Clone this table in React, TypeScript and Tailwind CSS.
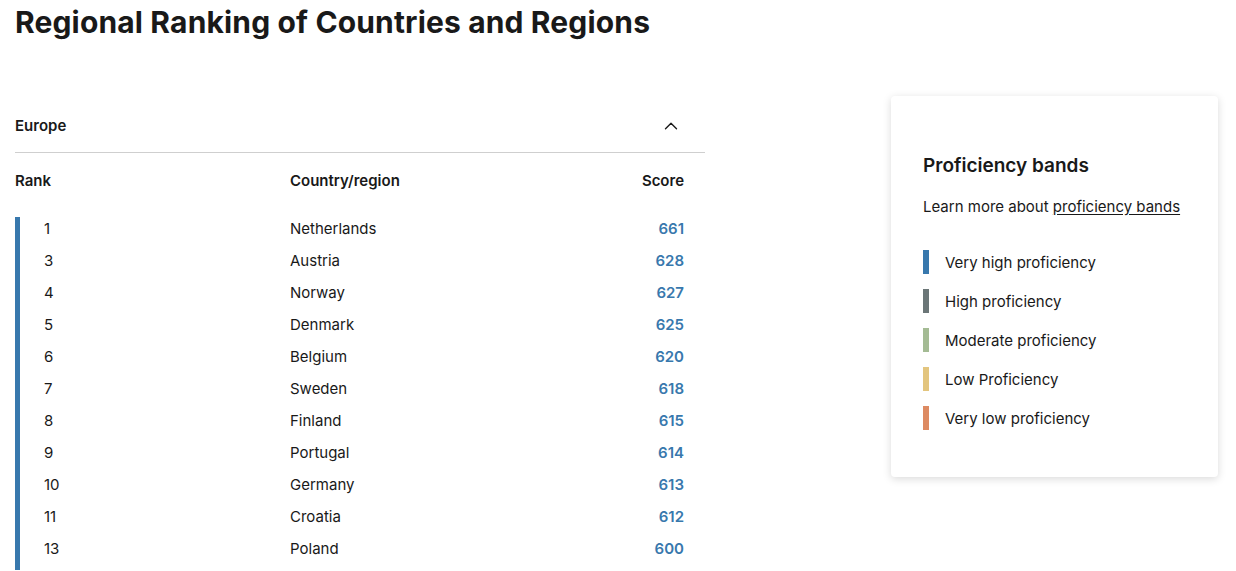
import { ChevronUp } from 'lucide-react';

const rows = [
  { rank: 1, country: 'Netherlands', score: 661 },
  { rank: 3, country: 'Austria', score: 628 },
  { rank: 4, country: 'Norway', score: 627 },
  { rank: 5, country: 'Denmark', score: 625 },
  { rank: 6, country: 'Belgium', score: 620 },
  { rank: 7, country: 'Sweden', score: 618 },
  { rank: 8, country: 'Finland', score: 615 },
  { rank: 9, country: 'Portugal', score: 614 },
  { rank: 10, country: 'Germany', score: 613 },
  { rank: 11, country: 'Croatia', score: 612 },
  { rank: 13, country: 'Poland', score: 600 },
];

const bands = [
  { label: 'Very high proficiency', color: 'bg-[#3878ad]' },
  { label: 'High proficiency', color: 'bg-[#6b7677]' },
  { label: 'Moderate proficiency', color: 'bg-[#a4bb94]' },
  { label: 'Low Proficiency', color: 'bg-[#e3c57e]' },
  { label: 'Very low proficiency', color: 'bg-[#dd8a62]' },
];

const App = () => {
  return (
    <div className="h-[571px] w-[1236px] overflow-hidden bg-white pl-[15px] pr-[18px] text-[#191919] font-['Inter',sans-serif]">
      <h1 className="text-[30px] font-bold leading-[44px] tracking-[0.15px]">
        Regional Ranking of Countries and Regions
      </h1>

      <div className="flex justify-between">
        {/* Ranking table */}
        <div className="w-[690px] pt-[56px]">
          <div className="flex h-[53px] items-center justify-between border-b border-[#cfcfcf] pr-[23px]">
            <span className="pt-[1px] text-[15px] font-semibold">Europe</span>
            <ChevronUp size={22} strokeWidth={1.5} />
          </div>

          <div className="flex pt-[17px] pb-[25px] text-[15px] font-semibold leading-[22px]">
            <div className="w-[275px]">Rank</div>
            <div className="flex-1">Country/region</div>
            <div className="pr-[21px]">Score</div>
          </div>

          <div className="flex flex-col gap-[10px] border-l-[5px] border-[#3878ad] pb-[10px] pt-[1px] text-[15px] leading-[22px]">
            {rows.map((r) => (
              <div key={r.rank} className="flex h-[22px]">
                <div className="w-[270px] pl-[24px]">{r.rank}</div>
                <div className="flex-1">{r.country}</div>
                <div className="pr-[21px] font-semibold text-[#3878ad]">{r.score}</div>
              </div>
            ))}
          </div>
        </div>

        {/* Proficiency bands card */}
        <div className="mt-[52px] h-[381px] w-[327px] rounded-[4px] bg-white px-[32px] pt-[57px] shadow-[0_2px_8px_rgba(0,0,0,0.15)]">
          <h2 className="text-[19px] font-semibold leading-[26px]">Proficiency bands</h2>
          <p className="mt-[17px] text-[15px] leading-[22px]">
            Learn more about <span className="underline underline-offset-2">proficiency bands</span>
          </p>
          <div className="mt-[32px] flex flex-col gap-[15px]">
            {bands.map((b) => (
              <div key={b.label} className="flex h-[24px] items-center">
                <span className={`h-[24px] w-[6px] ${b.color}`} />
                <span className="pl-[16px] pt-[3px] text-[15px]">{b.label}</span>
              </div>
            ))}
          </div>
        </div>
      </div>
    </div>
  );
};

export default App;
